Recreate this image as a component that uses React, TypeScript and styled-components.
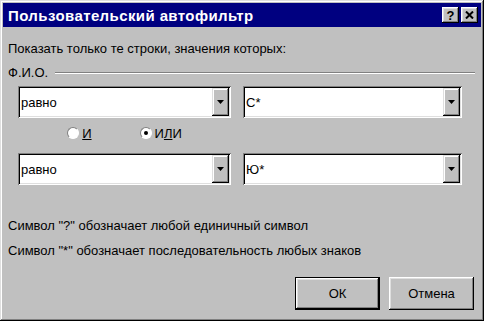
import React from "react";
import styled, { createGlobalStyle } from "styled-components";

const Global = createGlobalStyle`
  html, body { margin: 0; padding: 0; background: #c0c0c0; }
  body { font-family: "Liberation Sans", Arial, sans-serif; }
`;

const Window = styled.div`
  box-sizing: border-box;
  width: 484px;
  height: 321px;
  padding: 3px;
  background: #c0c0c0;
  box-shadow: inset -1px -1px #000, inset 1px 1px #dfdfdf,
    inset -2px -2px #808080, inset 2px 2px #fff;
  display: flex;
  flex-direction: column;
`;

const TitleBar = styled.div`
  height: 24px;
  background: #000080;
  display: flex;
  align-items: center;
  padding: 0 3px 0 5px;
  gap: 2px;
`;

const Title = styled.div`
  flex: 1;
  color: #fff;
  font-weight: bold;
  font-size: 15px;
  letter-spacing: 0.4px;
  white-space: nowrap;
`;

const CaptionButton = styled.div`
  box-sizing: border-box;
  width: 17px;
  height: 16px;
  background: #c0c0c0;
  box-shadow: inset -1px -1px #000, inset 1px 1px #fff, inset -2px -2px #808080,
    inset 2px 2px #dfdfdf;
  display: flex;
  align-items: center;
  justify-content: center;
  font-weight: bold;
  font-size: 13px;
  color: #000;
  line-height: 1;
`;

const Body = styled.div`
  flex: 1;
  padding: 14px 6px 0 5px;
  display: flex;
  flex-direction: column;
  font-size: 13px;
  line-height: 15px;
  color: #000;
`;

const Prompt = styled.div`
  white-space: nowrap;
`;

const GroupRow = styled.div`
  margin-top: 9px;
  display: flex;
  align-items: center;
  gap: 7px;
`;

const Rule = styled.div`
  flex: 1;
  height: 0;
  border-top: 1px solid #808080;
  border-bottom: 1px solid #fff;
`;

const ConditionGrid = styled.div`
  margin-top: 6px;
  padding-left: 10px;
  display: grid;
  grid-template-columns: 213px 219px;
  column-gap: 12px;
`;

const Combo = styled.div`
  box-sizing: border-box;
  height: 32px;
  background: #fff;
  box-shadow: inset 1px 1px #808080, inset -1px -1px #fff, inset 2px 2px #000,
    inset -2px -2px #dfdfdf;
  padding: 2px;
  display: flex;
  align-items: stretch;
`;

const ComboText = styled.div`
  flex: 1;
  display: flex;
  align-items: center;
  padding-left: 1px;
  white-space: nowrap;
`;

const ArrowButton = styled.div`
  box-sizing: border-box;
  width: 17px;
  background: #c0c0c0;
  box-shadow: inset -1px -1px #000, inset 1px 1px #dfdfdf, inset -2px -2px #808080,
    inset 2px 2px #fff;
  display: flex;
  align-items: center;
  justify-content: center;
`;

const RadioRow = styled.div`
  grid-column: 1;
  height: 35px;
  display: flex;
  align-items: center;
  justify-content: center;
  gap: 48px;
  padding-bottom: 5px;
  box-sizing: border-box;
`;

const RadioLabel = styled.label`
  display: flex;
  align-items: center;
  gap: 3px;
`;

const RadioCircle = styled.span<{ $checked?: boolean }>`
  position: relative;
  width: 12px;
  height: 12px;
  border-radius: 50%;
  background: #fff;
  border: 1px solid;
  border-color: #808080 #fff #fff #808080;
  box-sizing: border-box;
  &::after {
    content: "";
    position: absolute;
    left: 3px;
    top: 3px;
    width: 4px;
    height: 4px;
    border-radius: 50%;
    background: ${(p) => (p.$checked ? "#000" : "transparent")};
  }
`;

const Hints = styled.div`
  margin-top: 33px;
  display: flex;
  flex-direction: column;
  gap: 10px;
`;

const ButtonRow = styled.div`
  margin-top: 19px;
  display: flex;
  justify-content: flex-end;
  gap: 9px;
  padding-right: 1px;
`;

const DialogButton = styled.div<{ $default?: boolean }>`
  box-sizing: border-box;
  width: 85px;
  height: 33px;
  background: #c0c0c0;
  display: flex;
  align-items: center;
  justify-content: center;
  box-shadow: ${(p) =>
    p.$default
      ? "inset 0 0 0 1px #000, inset -2px -2px #000, inset 2px 2px #fff, inset -3px -3px #808080, inset 3px 3px #dfdfdf"
      : "inset -1px -1px #000, inset 1px 1px #fff, inset -2px -2px #808080, inset 2px 2px #dfdfdf"};
`;

const Arrow = () => (
  <svg width="7" height="4" viewBox="0 0 7 4">
    <path d="M0 0h7L3.5 4z" fill="#000" />
  </svg>
);

const CloseGlyph = () => (
  <svg width="9" height="8" viewBox="0 0 9 8">
    <path d="M1 0.5L8 7.5M8 0.5L1 7.5" stroke="#000" strokeWidth="2" />
  </svg>
);

const ComboBox = ({ value }: { value: string }) => (
  <Combo>
    <ComboText>{value}</ComboText>
    <ArrowButton>
      <Arrow />
    </ArrowButton>
  </Combo>
);

export default function App() {
  return (
    <>
      <Global />
      <Window>
        <TitleBar>
          <Title>Пользовательский автофильтр</Title>
          <CaptionButton>?</CaptionButton>
          <CaptionButton>
            <CloseGlyph />
          </CaptionButton>
        </TitleBar>
        <Body>
          <Prompt>Показать только те строки, значения которых:</Prompt>
          <GroupRow>
            <span>Ф.И.О.</span>
            <Rule />
          </GroupRow>
          <ConditionGrid>
            <ComboBox value="равно" />
            <ComboBox value="С*" />
            <RadioRow>
              <RadioLabel>
                <RadioCircle />
                <u>И</u>
              </RadioLabel>
              <RadioLabel>
                <RadioCircle $checked />
                <span>
                  И<u>Л</u>И
                </span>
              </RadioLabel>
            </RadioRow>
            <span />
            <ComboBox value="равно" />
            <ComboBox value="Ю*" />
          </ConditionGrid>
          <Hints>
            <div>Символ "?" обозначает любой единичный символ</div>
            <div>Символ "*" обозначает последовательность любых знаков</div>
          </Hints>
          <ButtonRow>
            <DialogButton $default>ОК</DialogButton>
            <DialogButton>Отмена</DialogButton>
          </ButtonRow>
        </Body>
      </Window>
    </>
  );
}
